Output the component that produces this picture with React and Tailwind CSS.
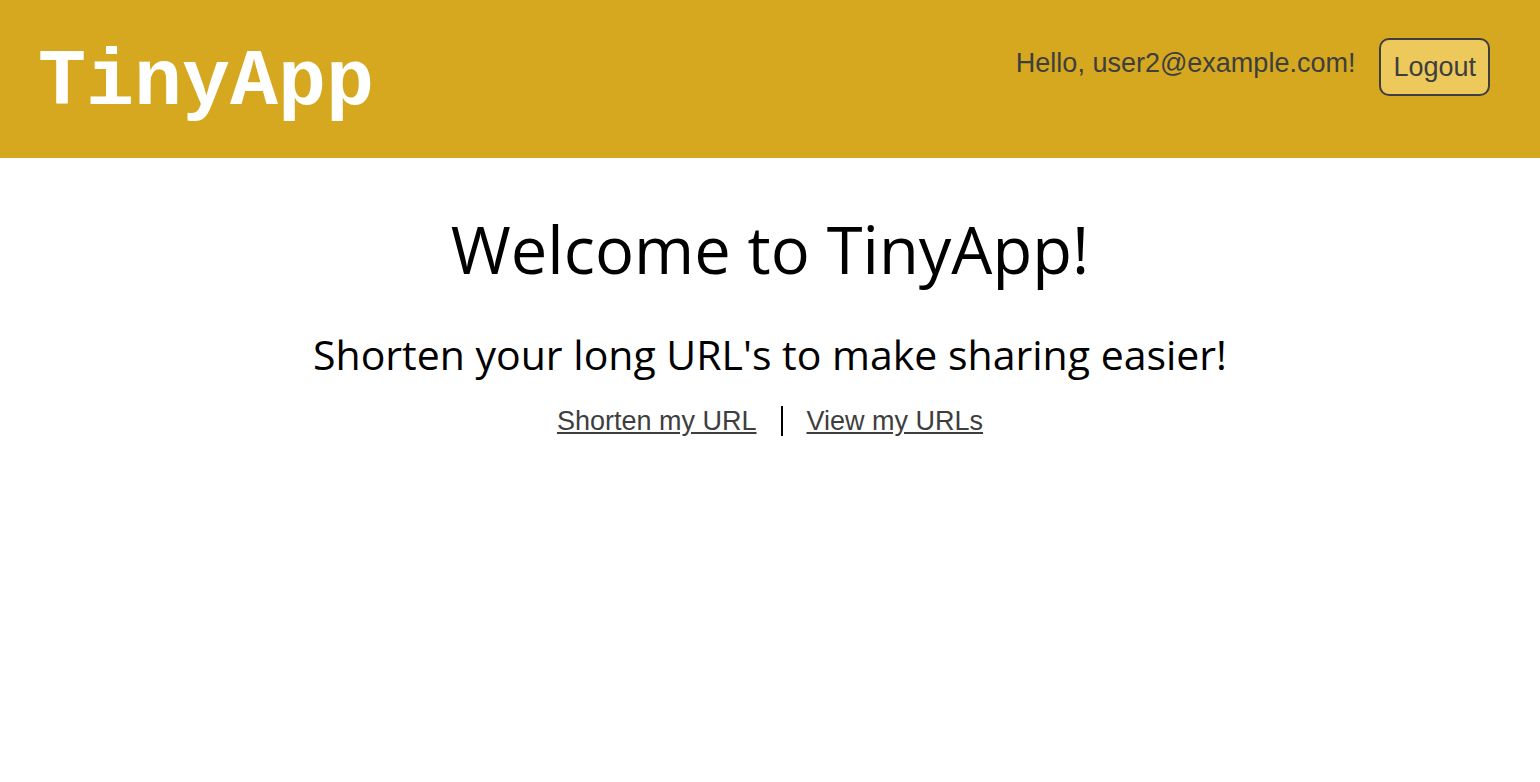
export default function App() {
  return (
    <div className="min-h-screen bg-white font-['Liberation_Sans',Arial,sans-serif] text-black">
      <header className="flex items-start justify-between bg-[#d5a81f] px-[38px] pt-[38px] pb-8">
        <h1 className="pt-[2px] font-['Liberation_Mono','Courier_New',monospace] text-[80px] leading-[86px] font-bold text-white">
          TinyApp
        </h1>
        <div className="mr-3 flex items-start gap-6 text-[27px] leading-8 text-[#3e3e3e]">
          <p className="pt-[9px]">Hello, user2@example.com!</p>
          <form onSubmit={(e) => e.preventDefault()}>
            <button type="submit" className="rounded-[10px] border-2 border-[#3e3e3e] bg-[#edc95c] px-3 py-[11px]">
              Logout
            </button>
          </form>
        </div>
      </header>
      <main className="flex flex-col items-center pt-[47px] text-center">
        <h2 className="font-['Open_Sans','Trebuchet_MS',sans-serif] text-[65px] leading-[88px]">
          Welcome to TinyApp!
        </h2>
        <p className="mt-[33px] font-['Open_Sans','Trebuchet_MS',sans-serif] text-[41px] leading-[56px]">
          Shorten your long URL's to make sharing easier!
        </p>
        <nav aria-label="URLs" className="mt-[23px] flex items-center gap-6 text-[27px] leading-8 text-[#3e3e3e]">
          <a href="#new" className="underline">Shorten my URL</a>
          <span className="h-[30px] w-[2px] bg-black" />
          <a href="#urls" className="underline">View my URLs</a>
        </nav>
      </main>
    </div>
  );
}
